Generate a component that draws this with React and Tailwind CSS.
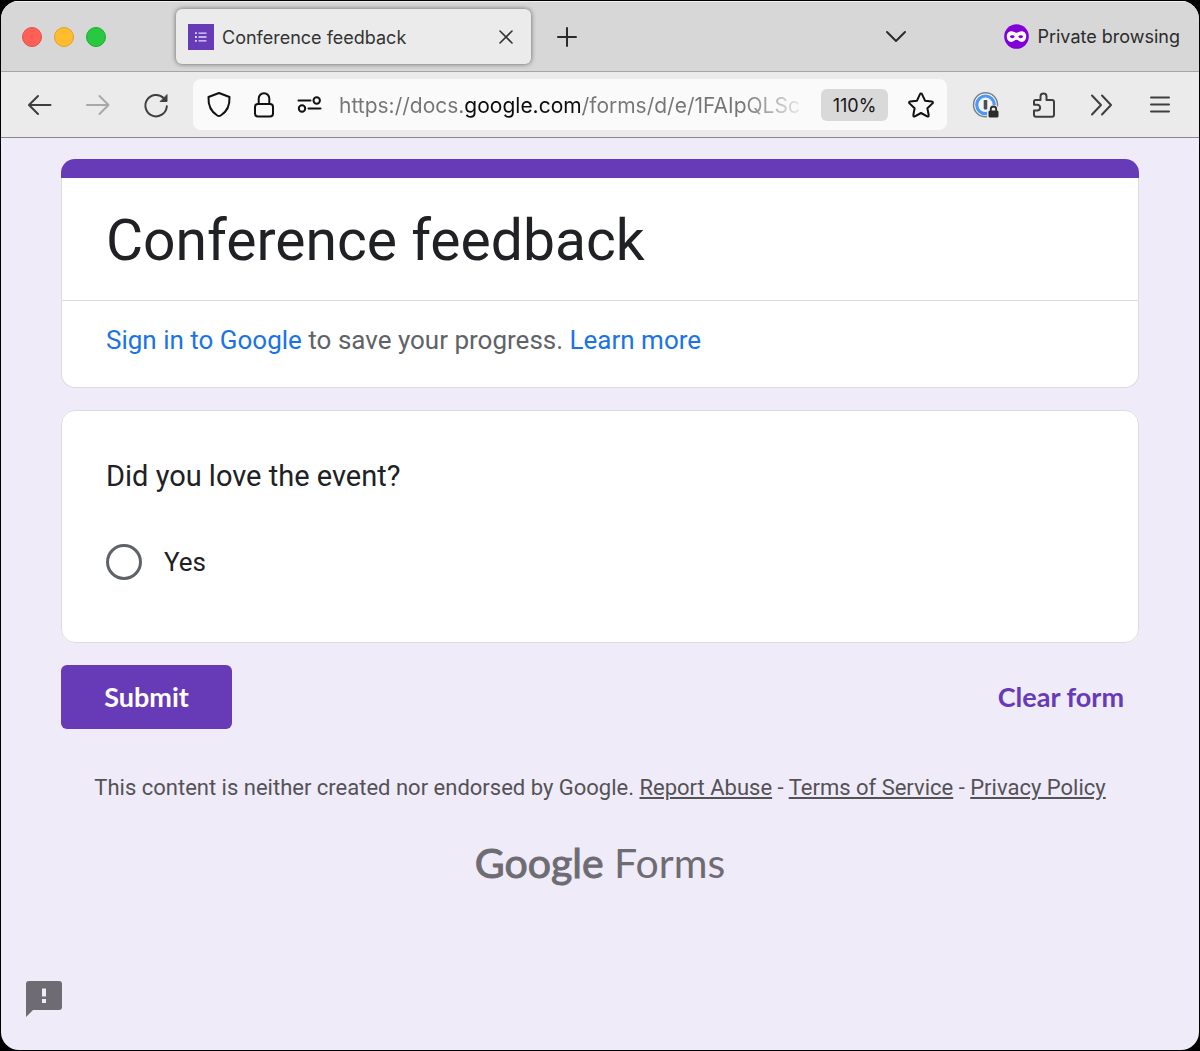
import React, { useState } from 'react';

const App = () => {
    const [url, setUrl] = useState('https://docs.google.com/forms/d/e/1FAIpQLSc');

    return (
        <div className="min-h-screen bg-black p-px flex flex-col">
            <div className="flex-1 flex flex-col rounded-[18px] overflow-hidden bg-[#efebf8]">
                <TabBar />
                <Toolbar url={url} setUrl={setUrl} />
                <FormPage />
            </div>
        </div>
    );
};

const TabBar = () => (
    <header className="h-[71px] shrink-0 flex items-center bg-[#d7d7d7] border-t border-t-[#f0f0f0] border-b border-b-[#a5a5a5] pl-[21px] pr-[19px]">
        <div className="flex gap-3">
            <button aria-label="Close window" className="size-5 rounded-full bg-[#fe5f57] border border-[#e2514a]" />
            <button aria-label="Minimize window" className="size-5 rounded-full bg-[#febc2e] border border-[#dfa123]" />
            <button aria-label="Zoom window" className="size-5 rounded-full bg-[#28c840] border border-[#1dad2b]" />
        </div>

        <div className="ml-[70px] w-[355px] h-[55px] flex items-center rounded-md bg-[#ebebeb] shadow-[0_0_5px_rgba(0,0,0,0.55)] pl-3 pr-4">
            <svg className="size-[26px] shrink-0" viewBox="0 0 26 26">
                <rect width="26" height="26" fill="#673ab7" />
                <g stroke="#e6dcf6" strokeWidth="1.3">
                    <path d="M10.5 9.2h8M10.5 13h8M10.5 16.8h8" />
                    <path d="M7 9.2h1.8M7 13h1.8M7 16.8h1.8" strokeWidth="1.8" />
                </g>
            </svg>
            <span className="ml-2 pt-0.5 flex-1 truncate font-[Inter] text-[18px] leading-6 text-[#333]">Conference feedback</span>
            <button aria-label="Close tab">
                <svg className="size-[18px]" viewBox="0 0 18 18" fill="none" stroke="#333" strokeWidth="1.6" strokeLinecap="round">
                    <path d="M3 3l12 12M15 3L3 15" />
                </svg>
            </button>
        </div>

        <button aria-label="New tab" className="ml-6">
            <svg className="size-6" viewBox="0 0 24 24" fill="none" stroke="#2b2b2b" strokeWidth="2" strokeLinecap="round">
                <path d="M12 3v18M3 12h18" />
            </svg>
        </button>

        <button aria-label="List all tabs" className="ml-auto">
            <svg className="size-6" viewBox="0 0 24 24" fill="none" stroke="#2b2b2b" strokeWidth="2" strokeLinecap="round" strokeLinejoin="round">
                <path d="M3 7l9 9 9-9" />
            </svg>
        </button>

        <div className="ml-24 flex items-center gap-2">
            <svg className="size-[25px]" viewBox="0 0 26 26">
                <circle cx="13" cy="13" r="12.8" fill="#8000d7" />
                <path
                    fill="#fff"
                    fillRule="evenodd"
                    d="M7.8 7.6c2.200 0 3.500 1.500 5.200 1.500s3-1.500 5.200-1.500c3 0 4.900 2.200 4.900 5.200 0 3.300-1.900 5.800-4.700 5.800-2.600 0-3.700-2.300-5.400-2.300s-2.800 2.300-5.400 2.300c-2.800 0-4.700-2.500-4.700-5.800 0-3 1.900-5.200 4.900-5.200zM6.1 12.900c.5 1.200 1.500 1.800 2.600 1.800s2-.6 2.400-1.600c-.6-1-1.500-1.500-2.600-1.500s-1.900.5-2.400 1.300zM19.900 12.900c-.5 1.200-1.500 1.800-2.600 1.800s-2-.6-2.400-1.600c.6-1 1.500-1.500 2.600-1.500s1.900.5 2.400 1.300z"
                />
            </svg>
            <span className="font-[Inter] text-[18px] leading-6 text-[#2b2b2b]">Private browsing</span>
        </div>
    </header>
);

const Toolbar = ({ url, setUrl }) => (
    <div className="h-[66px] shrink-0 flex items-center bg-[#ebebeb] border-b border-[#88888a] pl-6 pr-6">
        <div className="flex gap-7">
            <ToolButton label="Back">
                <path d="M25.5 15H4M13 6l-9 9 9 9" />
            </ToolButton>
            <ToolButton label="Forward" color="text-[#a8a8a8]">
                <path d="M4 15h21.5M16.500 6l9 9-9 9" />
            </ToolButton>
            <ToolButton label="Reload">
                <path d="M25.8 16.2A10.7 10.7 0 1 1 22.8 8.2" />
                <path d="M26 5v6.5h-6.5z" fill="currentColor" strokeWidth="1" />
            </ToolButton>
        </div>

        <div className="ml-[22px] h-[51px] flex-1 min-w-0 flex items-center rounded-lg bg-[#fafafa] px-[11px]">
            <div className="flex gap-[15px]">
                <ToolButton label="Tracking protection" color="text-[#111]">
                    <path d="M15 3l10.500 4c.4 7.700-2.200 14.500-8.800 18.500a3.400 3.400 0 0 1-3.400 0C6.700 21.500 4.100 14.700 4.500 7z" />
                </ToolButton>
                <ToolButton label="Site information" color="text-[#111]">
                    <rect x="6" y="14" width="18" height="12.500" rx="3" />
                    <path d="M9.700 14V8.500a5.300 5.300 0 0 1 10.600 0V14" />
                </ToolButton>
                <ToolButton label="Permissions" color="text-[#111]">
                    <path d="M4.500 10.500h12M14.500 18.500h12" />
                    <circle cx="22.700" cy="10.500" r="3.200" />
                    <circle cx="8" cy="18.500" r="3.200" />
                </ToolButton>
            </div>
            {/* Host part is darker than the rest, the tail fades out */}
            <input
                type="text"
                aria-label="Address"
                value={url}
                onChange={(e) => setUrl(e.target.value)}
                className="ml-[15px] pt-0.5 flex-1 min-w-0 h-8 outline-none font-[Inter] text-[21px] text-transparent caret-black bg-clip-text bg-[linear-gradient(to_right,#757575_126px,#0c0c0c_126px,#0c0c0c_244px,#757575_244px,#757575_86%,transparent)]"
            />
            <button className="ml-3 w-[67px] h-8 pt-0.5 rounded-md bg-[#d9d9d9] font-[Inter] text-[18px] leading-6 text-[#161616]">110%</button>
            <button aria-label="Bookmark this page" className="ml-[18px]">
                <svg className="size-[30px]" viewBox="0 0 30 30" fill="none" stroke="#111" strokeWidth="2" strokeLinejoin="round">
                    <path d="M14 4.200a1.100 1.100 0 0 1 2 0l3 6.500 6.900.9a1 1 0 0 1 .6 1.800l-5.100 4.900 1.300 7a1 1 0 0 1-1.500 1.100L15 23l-6.200 3.400a1 1 0 0 1-1.500-1.100l1.300-7-5.100-4.900a1 1 0 0 1 .6-1.800l6.900-.9z" />
                </svg>
            </button>
        </div>

        <div className="ml-6 flex gap-7">
            <button aria-label="Password manager">
                <svg className="size-[30px]" viewBox="0 0 30 30" fill="none">
                    <circle cx="14.500" cy="14.800" r="12" fill="#f4f6f8" stroke="#7d8187" strokeWidth="1.500" />
                    <circle cx="14.500" cy="14.800" r="8.800" stroke="#4a9af5" strokeWidth="3.200" />
                    <rect x="12.700" y="10" width="3.600" height="9.400" rx=".8" fill="#4b5057" />
                    <path d="M16 30V20l3-5h6l5 5v10z" fill="#ebebeb" />
                    <rect x="17.500" y="20.500" width="10" height="7" rx="1.500" fill="#2c2c2c" />
                    <path d="M19.800 21V19.200a2.700 2.700 0 0 1 5.400 0V21" stroke="#2c2c2c" strokeWidth="1.800" />
                </svg>
            </button>
            <ToolButton label="Extensions">
                <path d="M6.500 10h5V6.500a3 3 0 0 1 6 0V10H23a2 2 0 0 1 2 2v12.800a2 2 0 0 1-2 2H7a2 2 0 0 1-2-2v-4.300h3.200a2.900 2.900 0 0 0 0-5.800H5v-3.200A1.500 1.500 0 0 1 6.500 10z" />
            </ToolButton>
            <ToolButton label="More tools">
                <path d="M5 5.500l9 9.500-9 9.500M15 5.500l9 9.500-9 9.500" />
            </ToolButton>
            <ToolButton label="Application menu">
                <path d="M6 7.500h18M6 14.500h18M6 21.500h18" />
            </ToolButton>
        </div>
    </div>
);

const ToolButton = ({ label, color = 'text-[#3e3e3e]', children }) => (
    <button aria-label={label} className={color}>
        <svg className="size-[30px]" viewBox="0 0 30 30" fill="none" stroke="currentColor" strokeWidth="2" strokeLinecap="round" strokeLinejoin="round">
            {children}
        </svg>
    </button>
);

const FormPage = () => (
    <main className="relative flex-1 px-[60px] pt-[21px] font-[Roboto] text-[#202124]">
        <form onSubmit={(e) => e.preventDefault()}>
            <section>
                <div className="h-[19px] rounded-t-[14px] bg-[#673ab7]" />
                <div className="rounded-b-[14px] border border-t-0 border-[#dadce0] bg-white">
                    <h1 className="px-11 pt-[27px] pb-[23px] text-[57px] leading-[72px]">Conference feedback</h1>
                    <p className="border-t border-[#dadce0] px-11 pt-5 pb-7 text-[26px] leading-[38px] text-[#5f6368]">
                        <a href="#signin" className="text-[#1a73e8]">Sign in to Google</a> to save your progress.{' '}
                        <a href="#more" className="text-[#1a73e8]">Learn more</a>
                    </p>
                </div>
            </section>

            <fieldset className="mt-[22px] rounded-[14px] border border-[#dadce0] bg-white px-11 pt-[45px] pb-[61px]">
                <h2 className="text-[29px] leading-10">Did you love the event?</h2>
                <label className="mt-[47px] flex items-center gap-[22px] text-[26px] leading-[38px]">
                    <input
                        type="radio"
                        name="love"
                        className="appearance-none size-[36px] rounded-full border-[3px] border-[#5f6368] checked:border-[#673ab7] checked:bg-[#673ab7] checked:bg-clip-content checked:p-1.5"
                    />
                    Yes
                </label>
            </fieldset>

            <div className="mt-[22px] flex items-center justify-between font-[Lato] font-bold text-[27px] leading-8">
                <button type="submit" className="w-[171px] h-16 rounded-md bg-[#673ab7] text-white">Submit</button>
                <button type="reset" className="mr-[15px] text-[#673ab7]">Clear form</button>
            </div>
        </form>

        <footer className="mt-[43px] text-center">
            <p className="text-[22px] leading-8 text-[#545257]">
                This content is neither created nor endorsed by Google.{' '}
                <a href="#abuse" className="underline">Report Abuse</a> -{' '}
                <a href="#terms" className="underline">Terms of Service</a> -{' '}
                <a href="#privacy" className="underline">Privacy Policy</a>
            </p>
            <a href="#forms" className="mt-8 inline-block font-[Lato] text-[41px] leading-[54px] text-[#6e6c72]">
                <span className="[-webkit-text-stroke:1px_#6e6c72]">Google</span> Forms
            </a>
        </footer>

        <button aria-label="Report a problem" className="absolute left-6 bottom-8">
            <svg className="size-[38px]" viewBox="0 0 38 38">
                <path
                    fill="#6e6c72"
                    fillRule="evenodd"
                    d="M4 1h30a3 3 0 0 1 3 3v23a3 3 0 0 1-3 3H8l-7 7V4a3 3 0 0 1 3-3zM17 8.500v8h4v-8zM17 19v4h4v-4z"
                />
            </svg>
        </button>
    </main>
);

export default App;
